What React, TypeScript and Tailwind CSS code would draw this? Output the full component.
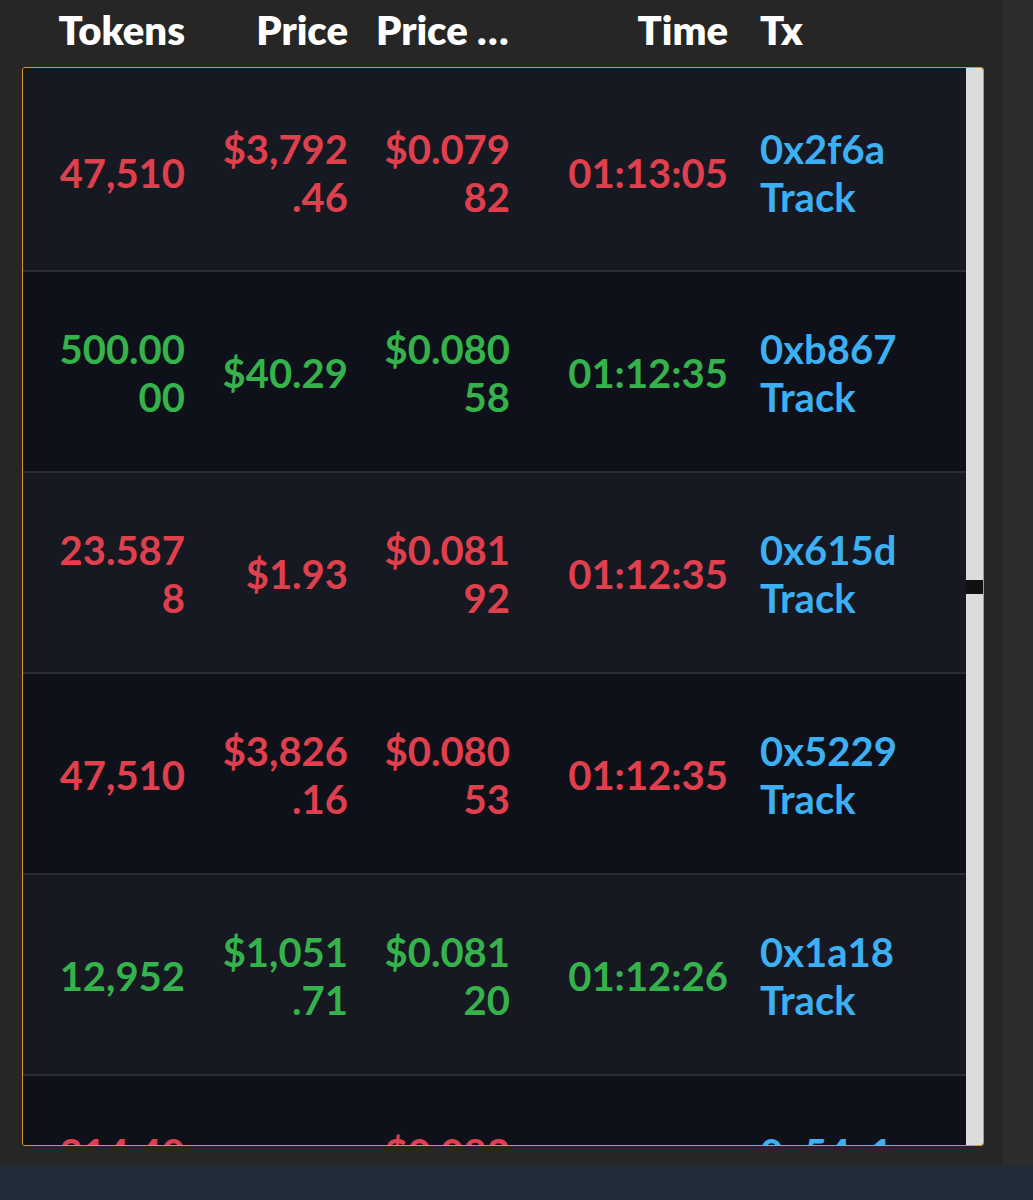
import React from "react";

type Row = {
  side: "buy" | "sell";
  tokens: string;
  price: string;
  unit: string;
  time: string;
  tx: string;
};

const rows: Row[] = [
  { side: "sell", tokens: "47,510", price: "$3,792.46", unit: "$0.07982", time: "01:13:05", tx: "0x2f6a" },
  { side: "buy", tokens: "500.0000", price: "$40.29", unit: "$0.08058", time: "01:12:35", tx: "0xb867" },
  { side: "sell", tokens: "23.5878", price: "$1.93", unit: "$0.08192", time: "01:12:35", tx: "0x615d" },
  { side: "sell", tokens: "47,510", price: "$3,826.16", unit: "$0.08053", time: "01:12:35", tx: "0x5229" },
  { side: "buy", tokens: "12,952", price: "$1,051.71", unit: "$0.08120", time: "01:12:26", tx: "0x1a18" },
  { side: "sell", tokens: "214.4000", price: "$17.66", unit: "$0.08236", time: "01:12:10", tx: "0x54c1" },
];

const font = { fontFamily: "Lato, 'Noto Sans', sans-serif" };

export default function App() {
  return (
    <div className="w-[1033px] h-[1200px] flex flex-col bg-[#222b38]" style={font}>
      <div className="flex h-[1165px]">
        <div className="w-[1003px] h-full bg-[#262626] flex flex-col pt-[6px]">
          {/* header */}
          <div className="grid grid-cols-[162px_163px_162px_218px_1fr] pl-[39px] text-[40px] leading-[48px] font-extrabold text-white">
            <div className="px-[16px] text-right">Tokens</div>
            <div className="px-[16px] text-right">Price</div>
            <div className="pl-[12px] pr-[16px] text-right truncate">Price Change</div>
            <div className="px-[16px] text-right">Time</div>
            <div className="px-[16px]">Tx</div>
          </div>
          {/* table box */}
          <div className="ml-[22px] mt-[13px] w-[962px] h-[1079px] border border-[#d29a2c] rounded-[3px] flex overflow-hidden">
            <div className="flex-1 overflow-hidden">
              {rows.map((r, i) => {
                const color = r.side === "buy" ? "text-[#35b24b]" : "text-[#e0404e]";
                const bg = i % 2 === 0 ? "bg-[#161922]" : "bg-[#0e1119]";
                const pad = i === 0 ? "pt-[57px] pb-[49px]" : "pt-[53px] pb-[50px]";
                return (
                  <div
                    key={i}
                    className={`grid grid-cols-[162px_163px_162px_218px_1fr] pl-[16px] ${pad} border-b-2 border-[#2a2d32] items-center text-[40px] leading-[48px] font-bold ${bg} ${color}`}
                  >
                    <div className="px-[16px] text-right [overflow-wrap:anywhere]">{r.tokens}</div>
                    <div className="px-[16px] text-right [overflow-wrap:anywhere]">{r.price}</div>
                    <div className="px-[16px] text-right [overflow-wrap:anywhere]">{r.unit}</div>
                    <div className="px-[16px] text-right">{r.time}</div>
                    <div className="px-[16px] text-[#3db0f3]">
                      <div>{r.tx}</div>
                      <div>Track</div>
                    </div>
                  </div>
                );
              })}
            </div>
            <div className="relative w-[17px] h-full bg-[#dcdcdc]">
              <div className="absolute left-0 top-[512px] w-[17px] h-[14px] bg-[#111111]" />
            </div>
          </div>
        </div>
        <div className="flex-1 h-full bg-[#2d2d2d]" />
      </div>
    </div>
  );
}
